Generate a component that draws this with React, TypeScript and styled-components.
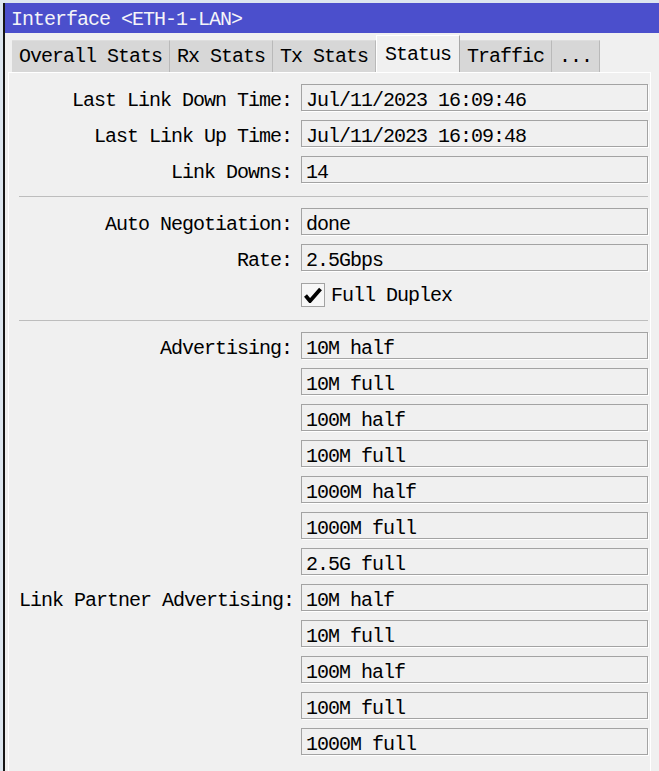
import React from 'react';
import styled, { createGlobalStyle } from 'styled-components';

const GlobalStyle = createGlobalStyle`
  html, body {
    margin: 0;
    padding: 0;
    background: #dde6ef;
  }
  body {
    font-family: "Liberation Mono", "Courier New", monospace;
    font-size: 20px;
    letter-spacing: -1px;
    color: #000;
  }
`;

const Window = styled.div`
  margin: 3px 0 0 3px;
  border-left: 2px solid #161616;
  background: #f0f0f0;
  min-height: calc(100vh - 3px);
  display: flex;
  flex-direction: column;
`;

const TitleBar = styled.div`
  height: 30px;
  box-sizing: border-box;
  padding: 7px 0 0 6px;
  line-height: 19px;
  background: #4b4fcc;
  color: #f4f4f8;
  white-space: nowrap;
`;

const TabStrip = styled.div`
  display: flex;
  align-items: flex-end;
  height: 39px;
  padding-left: 7px;
`;

const Tab = styled.div<{ $active?: boolean }>`
  box-sizing: border-box;
  height: ${p => (p.$active ? '37px' : '32px')};
  padding: ${p => (p.$active ? '9px 8px 0' : '6px 7px 0')};
  line-height: 19px;
  white-space: nowrap;
  background: ${p => (p.$active ? '#f0f0f0' : '#d7d7d7')};
  border-top: 1px solid ${p => (p.$active ? '#ffffff' : '#dedede')};
  border-left: ${p => (p.$active ? '1px solid #ffffff' : 'none')};
  border-right: 1px solid ${p => (p.$active ? '#a8a8a8' : '#b9b9b9')};
`;

const Panel = styled.div`
  margin: 0 8px 0 3px;
  border-top: 1px solid #ffffff;
  border-left: 1px solid #ffffff;
  border-right: 1px solid #ffffff;
  padding: 11px 2px 20px 10px;
  flex: 1;
`;

const FormGrid = styled.div`
  display: grid;
  grid-template-columns: 273px 347px;
  grid-auto-rows: 27px;
  column-gap: 9px;
  row-gap: 9px;
`;

const Label = styled.div`
  box-sizing: border-box;
  height: 27px;
  padding-top: 7px;
  line-height: 19px;
  text-align: right;
  white-space: nowrap;
`;

const ValueBox = styled.div`
  box-sizing: border-box;
  height: 27px;
  padding: 6px 0 0 4px;
  line-height: 19px;
  border: 1px solid #a3a3a3;
  box-shadow: 1px 1px 0 #ffffff;
  white-space: nowrap;
`;

const Separator = styled.div`
  width: 629px;
  height: 1px;
  background: #bdbdbd;
  margin: 13px 0 11px;
`;

const CheckRow = styled.label`
  display: flex;
  align-items: center;
  gap: 6px;
  padding-top: 3px;
  line-height: 19px;
  white-space: nowrap;
`;

const CheckBox = styled.span`
  box-sizing: border-box;
  width: 24px;
  height: 24px;
  border: 1px solid #a3a3a3;
  background: #f7f7f7;
  display: flex;
  align-items: center;
  justify-content: center;
`;

const CheckText = styled.span`
  padding-top: 1px;
`;

const Field = ({ label, values }: { label: string; values: string[] }) => (
  <>
    {values.map((v, i) => (
      <React.Fragment key={i}>
        <Label>{i === 0 ? label : ''}</Label>
        <ValueBox>{v}</ValueBox>
      </React.Fragment>
    ))}
  </>
);

const advertising = ['10M half', '10M full', '100M half', '100M full', '1000M half', '1000M full', '2.5G full'];
const partnerAdvertising = ['10M half', '10M full', '100M half', '100M full', '1000M full'];

export default function App() {
  return (
    <>
      <GlobalStyle />
      <Window>
        <TitleBar>Interface &lt;ETH-1-LAN&gt;</TitleBar>
        <TabStrip>
          <Tab>Overall Stats</Tab>
          <Tab>Rx Stats</Tab>
          <Tab>Tx Stats</Tab>
          <Tab $active>Status</Tab>
          <Tab>Traffic</Tab>
          <Tab>...</Tab>
        </TabStrip>
        <Panel>
          <FormGrid>
            <Field label="Last Link Down Time:" values={['Jul/11/2023 16:09:46']} />
            <Field label="Last Link Up Time:" values={['Jul/11/2023 16:09:48']} />
            <Field label="Link Downs:" values={['14']} />
          </FormGrid>
          <Separator />
          <FormGrid>
            <Field label="Auto Negotiation:" values={['done']} />
            <Field label="Rate:" values={['2.5Gbps']} />
            <Label />
            <CheckRow>
              <CheckBox>
                <svg width="18" height="16" viewBox="0 0 18 16">
                  <path d="M1.5 8.5 L6 14 L16.5 2" fill="none" stroke="#000" strokeWidth="3.8" strokeLinejoin="miter" />
                </svg>
              </CheckBox>
              <CheckText>Full Duplex</CheckText>
            </CheckRow>
          </FormGrid>
          <Separator />
          <FormGrid>
            <Field label="Advertising:" values={advertising} />
            <Field label="Link Partner Advertising:" values={partnerAdvertising} />
          </FormGrid>
        </Panel>
      </Window>
    </>
  );
}
